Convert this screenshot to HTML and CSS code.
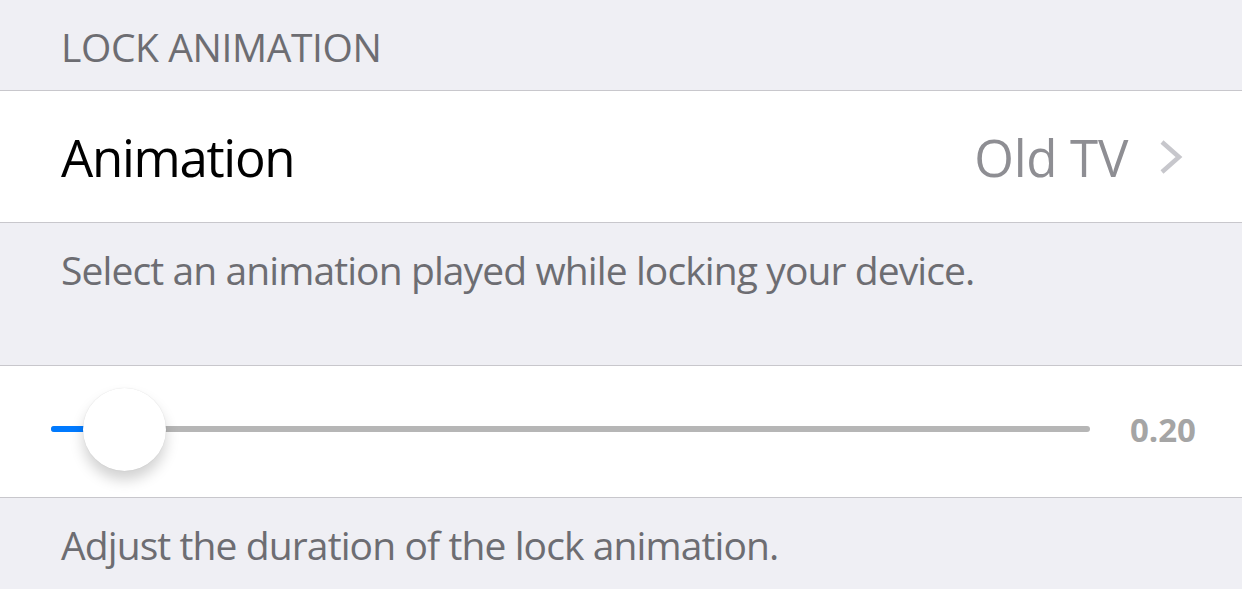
FILE: index.html
```html
<!DOCTYPE html>
<html lang="en">
<head>
<title>Lock Animation</title>
<link rel="stylesheet" href="styles.css">
</head>
<body>
<div class="group-title">LOCK ANIMATION</div>
<div class="cell">
    <span class="cell-label">Animation</span>
    <span class="cell-value">Old TV</span>
    <svg class="chevron" width="26" height="36" viewBox="0 0 26 36">
        <path d="M4 3 L21 18 L4 33" fill="none" stroke="#c7c7cc" stroke-width="4.5"/>
    </svg>
</div>
<div class="group-footer tall">Select an animation played while locking your device.</div>
<div class="cell slider-cell">
    <div class="slider">
        <div class="track"><div class="fill" style="width: 33px"></div></div>
        <div class="thumb"></div>
    </div>
    <span class="slider-value">0.20</span>
</div>
<div class="group-footer">Adjust the duration of the lock animation.</div>
</body>
</html>
```
FILE: styles.css
```css
body {
    margin: 0;
    background: #efeff4;
    font-family: "Open Sans", "Noto Sans", sans-serif;
    overflow: hidden;
}
.group-title {
    height: 90px;
    box-sizing: border-box;
    padding: 22px 0 0 61px;
    font-size: 39px;
    line-height: 50px;
    letter-spacing: -0.4px;
    color: #6d6d72;
}
.cell {
    display: flex;
    align-items: center;
    height: 131px;
    background: #fff;
    border-top: 1px solid #c8c7cc;
    border-bottom: 1px solid #c8c7cc;
    padding: 0 58px 0 61px;
}
.cell-label {
    flex: 1;
    font-size: 51px;
    letter-spacing: -1.3px;
    color: #000;
}
.cell-value {
    font-size: 51px;
    letter-spacing: -0.3px;
    color: #8e8e93;
    margin-right: 30px;
}
.group-footer {
    padding: 22px 0 0 61px;
    font-size: 39px;
    line-height: 50px;
    letter-spacing: -0.9px;
    color: #6d6d72;
    height: 95px;
}
.group-footer.tall {
    height: 120px;
}
.slider-cell {
    padding: 0 46px 5px 51px;
    height: 126px;
}
.slider {
    position: relative;
    flex: 1;
    height: 83px;
    display: flex;
    align-items: center;
    margin-right: 40px;
}
.track {
    flex: 1;
    height: 6px;
    border-radius: 3px;
    background: #b6b6b6;
    overflow: hidden;
}
.fill {
    height: 100%;
    background: #007aff;
}
.thumb {
    position: absolute;
    left: 32px;
    top: 0;
    width: 83px;
    height: 83px;
    border-radius: 50%;
    background: #fff;
    box-shadow: 0 9px 14px rgba(0,0,0,0.18), 0 0 1px rgba(0,0,0,0.15);
}
.slider-value {
    font-size: 33px;
    font-weight: bold;
    color: #a5a5a5;
}
```
